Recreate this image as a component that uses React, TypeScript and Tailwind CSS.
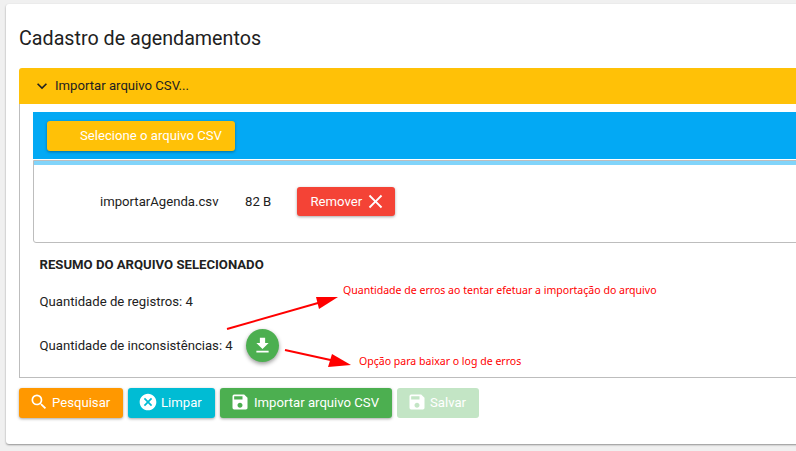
import * as React from "react";
import { MdCancel, MdClose, MdExpandMore, MdFileDownload, MdSave, MdSearch } from "react-icons/md";

const shadow = "shadow-[0_1px_3px_rgba(0,0,0,0.35)]";

function ActionButton({
  className,
  icon,
  label,
}: {
  className: string;
  icon: React.ReactNode;
  label: string;
}) {
  return (
    <button className={`flex h-[30px] items-center rounded-[3px] text-[13.15px] text-white ${className}`}>
      {icon}
      <span>{label}</span>
    </button>
  );
}

export default function App() {
  return (
    <div className="relative h-[451px] w-[796px] overflow-hidden bg-[#f0f0f0] font-['Roboto',sans-serif] text-[#212121]">
      <div className="ml-[6px] h-[440px] w-[1000px] translate-y-[4px] rounded-[3px] bg-white px-[13px] pt-[20px] shadow-[0_1px_2px_rgba(0,0,0,0.4)]">
        <h1 className="h-[44px] text-[19.7px] leading-[30px]">Cadastro de agendamentos</h1>

        <div className="flex h-[36px] items-center rounded-t-[3px] bg-[#ffc107] pl-[13px] text-[13.15px]">
          <MdExpandMore className="mr-[3px] text-[20px]" />
          <span>Importar arquivo CSV...</span>
        </div>

        <div className="h-[274px] border-x border-b border-[#bdbdbd] pl-[13px] pt-[8px] text-[13.15px]">
          <div className="flex h-[47px] items-center bg-[#03a9f4] pl-[14px]">
            <button className={`h-[30px] w-[188px] rounded-[3px] bg-[#ffc107] pl-[20px] text-white ${shadow}`}>
              Selecione o arquivo CSV
            </button>
          </div>
          <div className="mt-px h-[83px] rounded-bl-[3px] border border-[#bdbdbd] bg-white">
            <div className="h-[4px] bg-[#81d4fa]" />
            <div className="flex items-center pl-[66px] pt-[22px]">
              <span className="w-[145px]">importarAgenda.csv</span>
              <span className="w-[52px]">82 B</span>
              <button className={`flex h-[29px] w-[98px] items-center rounded-[3px] bg-[#f44336] pl-[13.5px] text-white ${shadow}`}>
                Remover
                <MdClose className="ml-[2px] text-[23px]" />
              </button>
            </div>
          </div>

          <div className="pl-[6.5px] pt-[14px]">
            <h2 className="font-bold leading-[15px]">RESUMO DO ARQUIVO SELECIONADO</h2>
            <p className="mt-[22px] leading-[15px]">Quantidade de registros: 4</p>
            <div className="mt-[20px] flex h-[33px] items-center">
              <span>Quantidade de inconsistências: 4</span>
              <button className="ml-[13px] flex size-[33px] items-center justify-center rounded-full bg-[#4caf50] text-white shadow-[0_2px_4px_rgba(0,0,0,0.4)]">
                <MdFileDownload className="text-[21px]" />
              </button>
            </div>
          </div>
        </div>

        <div className="mt-[10px] flex gap-[5px]">
          <ActionButton
            className={`w-[104px] bg-[#ff9800] pl-[10px] ${shadow}`}
            icon={<MdSearch className="mr-[3px] -mt-[2px] text-[20px]" />}
            label="Pesquisar"
          />
          <ActionButton
            className={`w-[87px] bg-[#00bcd4] pl-[10px] ${shadow}`}
            icon={<MdCancel className="mr-[3px] -mt-[2px] text-[20px]" />}
            label="Limpar"
          />
          <ActionButton
            className={`w-[172px] bg-[#4caf50] pl-[10px] ${shadow}`}
            icon={<MdSave className="mr-[4px] -mt-[2px] text-[20px]" />}
            label="Importar arquivo CSV"
          />
          <ActionButton
            className="w-[82px] bg-[#c3e5c5] pl-[10px]"
            icon={<MdSave className="mr-[3px] -mt-[2px] text-[20px]" />}
            label="Salvar"
          />
        </div>
      </div>

      {/* annotations drawn over the screenshot */}
      <svg className="absolute left-0 top-0" width="796" height="451" viewBox="0 0 796 451">
        <line x1="227" y1="329" x2="325" y2="301" stroke="#ff0000" strokeWidth="2" />
        <polygon points="338,297 316,297 319,309" fill="#ff0000" />
        <line x1="285" y1="350" x2="335" y2="361" stroke="#ff0000" strokeWidth="2" />
        <polygon points="351,365 332,354 328,367" fill="#ff0000" />
      </svg>
      <span className="absolute left-[343px] top-[283px] font-['Noto_Sans',sans-serif] text-[10.55px] leading-[15px] text-[#ff0000]">
        Quantidade de erros ao tentar efetuar a importação do arquivo
      </span>
      <span className="absolute left-[359px] top-[354px] font-['Noto_Sans',sans-serif] text-[10.55px] leading-[15px] text-[#ff0000]">
        Opção para baixar o log de erros
      </span>
    </div>
  );
}
